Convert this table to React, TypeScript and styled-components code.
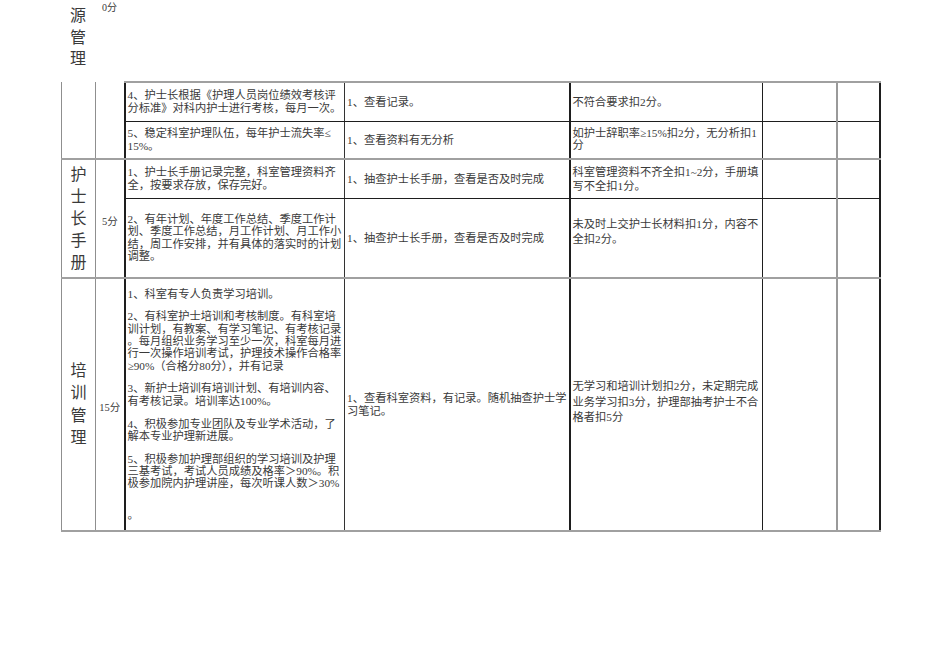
import React from 'react';
import styled, { createGlobalStyle } from 'styled-components';

const GlobalStyle = createGlobalStyle`
  html, body {
    margin: 0;
    padding: 0;
    background: #fff;
  }
  body {
    font-family: "Liberation Serif", "Noto Sans CJK SC", serif;
    color: #3a3a3a;
  }
`;

const GRAY = '#8f8f8f';
const DARK = '#1e1e1e';

const Page = styled.div`
  width: 950px;
  height: 672px;
  box-sizing: border-box;
  padding-left: 61px;
`;

// tail of the section carried over from the previous page
const Carry = styled.div`
  display: flex;
  height: 81px;
`;

const CarryName = styled.div`
  width: 34px;
  padding-top: 5px;
`;

const CarryScore = styled.div`
  width: 29px;
  padding-top: 2px;
  text-align: center;
  font-size: 10px;
  line-height: 12px;
`;

const Stack = styled.div<{ $step: number }>`
  display: flex;
  flex-direction: column;
  align-items: center;
  font-size: 16px;
  line-height: ${(p) => p.$step}px;
`;

const VLabel = ({ text, step = 22 }: { text: string; step?: number }) => (
  <Stack $step={step}>
    {[...text].map((c, i) => (
      <span key={i}>{c}</span>
    ))}
  </Stack>
);

const Sheet = styled.table`
  border-collapse: collapse;
  table-layout: fixed;
  width: 818px;
`;

const Col = styled.col<{ $w: number; $line: string; $end?: string }>`
  width: ${(p) => p.$w}px;
  border-left: ${(p) => p.$line};
  ${(p) => (p.$end ? `border-right: ${p.$end};` : '')}
`;

const Row = styled.tr<{ $h: number; $line: string; $bottom?: string }>`
  height: ${(p) => p.$h}px;
  border-top: ${(p) => p.$line};
  ${(p) => (p.$bottom ? `border-bottom: ${p.$bottom};` : '')}
`;

const Side = styled.td<{ $open?: boolean }>`
  padding: 0;
  text-align: center;
  vertical-align: middle;
  ${(p) => (p.$open ? 'border-top: hidden;' : '')}
`;

const Score = styled(Side)`
  font-size: 10.5px;
  padding-top: 3px;
`;

const Cell = styled.td<{ $lh?: number; $lift?: number }>`
  padding: 0 1px ${(p) => p.$lift ?? 0}px 2px;
  vertical-align: middle;
  text-align: left;
  white-space: nowrap;
  font-size: 11.25px;
  line-height: ${(p) => p.$lh ?? 12.3}px;
`;

const Blank = styled.td``;

const Para = styled.p<{ $gap?: number }>`
  margin: 0 0 ${(p) => p.$gap ?? 10.5}px;
  &:last-child {
    margin-bottom: 0;
  }
`;

const thin = (c: string) => `1px solid ${c}`;
const thick = (c: string) => `2px solid ${c}`;

export default function App() {
  return (
    <>
      <GlobalStyle />
      <Page>
        <Carry>
          <CarryName>
            <VLabel text="源管理" step={21.5} />
          </CarryName>
          <CarryScore>0分</CarryScore>
        </Carry>

        <Sheet>
          <colgroup>
            <Col $w={34} $line={thin(GRAY)} />
            <Col $w={29} $line={thin(GRAY)} />
            <Col $w={220} $line={thick(DARK)} />
            <Col $w={225} $line={thin('#333')} />
            <Col $w={193} $line={thick(DARK)} />
            <Col $w={74} $line={thin(DARK)} />
            <Col $w={43} $line={thick('#9a9a9a')} $end={thick(DARK)} />
          </colgroup>
          <tbody>
            <Row $h={39} $line={thick('#a0a0a0')}>
              <Side rowSpan={2} $open />
              <Side rowSpan={2} $open />
              <Cell>
                4、护士长根据《护理人员岗位绩效考核评
                <br />
                分标准》对科内护士进行考核，每月一次。
              </Cell>
              <Cell>1、查看记录。</Cell>
              <Cell>不符合要求扣2分。</Cell>
              <Blank />
              <Blank />
            </Row>
            <Row $h={38} $line={thin(DARK)}>
              <Cell>
                5、稳定科室护理队伍，每年护士流失率≤
                <br />
                15%。
              </Cell>
              <Cell>1、查看资料有无分析</Cell>
              <Cell $lh={11.5}>
                如护士辞职率≥15%扣2分，无分析扣1
                <br />分
              </Cell>
              <Blank />
              <Blank />
            </Row>
            <Row $h={39} $line={thick('#a0a0a0')}>
              <Side rowSpan={2}>
                <VLabel text="护士长手册" />
              </Side>
              <Score rowSpan={2}>5分</Score>
              <Cell>
                1、护士长手册记录完整，科室管理资料齐
                <br />
                全，按要求存放，保存完好。
              </Cell>
              <Cell>1、抽查护士长手册，查看是否及时完成</Cell>
              <Cell $lh={14}>
                科室管理资料不齐全扣1~2分，手册填
                <br />
                写不全扣1分。
              </Cell>
              <Blank />
              <Blank />
            </Row>
            <Row $h={80} $line={thin(DARK)}>
              <Cell>
                2、有年计划、年度工作总结、季度工作计
                <br />
                划、季度工作总结，月工作计划、月工作小
                <br />
                结，周工作安排，并有具体的落实时的计划
                <br />
                调整。
              </Cell>
              <Cell>1、抽查护士长手册，查看是否及时完成</Cell>
              <Cell $lh={15} $lift={12}>
                未及时上交护士长材料扣1分，内容不
                <br />
                全扣2分。
              </Cell>
              <Blank />
              <Blank />
            </Row>
            <Row $h={253} $line={thick('#a0a0a0')} $bottom={thick('#a0a0a0')}>
              <Side>
                <VLabel text="培训管理" step={22.3} />
              </Side>
              <Score>15分</Score>
              <Cell>
                <Para>1、科室有专人负责学习培训。</Para>
                <Para>
                  2、有科室护士培训和考核制度。有科室培
                  <br />
                  训计划，有教案、有学习笔记、有考核记录
                  <br />
                  。每月组织业务学习至少一次，科室每月进
                  <br />
                  行一次操作培训考试，护理技术操作合格率
                  <br />
                  ≥90%（合格分80分），并有记录
                </Para>
                <Para>
                  3、新护士培训有培训计划、有培训内容、
                  <br />
                  有考核记录。培训率达100%。
                </Para>
                <Para>
                  4、积极参加专业团队及专业学术活动，了
                  <br />
                  解本专业护理新进展。
                </Para>
                <Para $gap={19.5}>
                  5、积极参加护理部组织的学习培训及护理
                  <br />
                  三基考试，考试人员成绩及格率＞90%。积
                  <br />
                  极参加院内护理讲座，每次听课人数＞30%
                </Para>
                <Para>。</Para>
              </Cell>
              <Cell $lh={13}>
                1、查看科室资料，有记录。随机抽查护士学
                <br />
                习笔记。
              </Cell>
              <Cell $lh={15.5} $lift={4}>
                无学习和培训计划扣2分，未定期完成
                <br />
                业务学习扣3分，护理部抽考护士不合
                <br />
                格者扣5分
              </Cell>
              <Blank />
              <Blank />
            </Row>
          </tbody>
        </Sheet>
      </Page>
    </>
  );
}
